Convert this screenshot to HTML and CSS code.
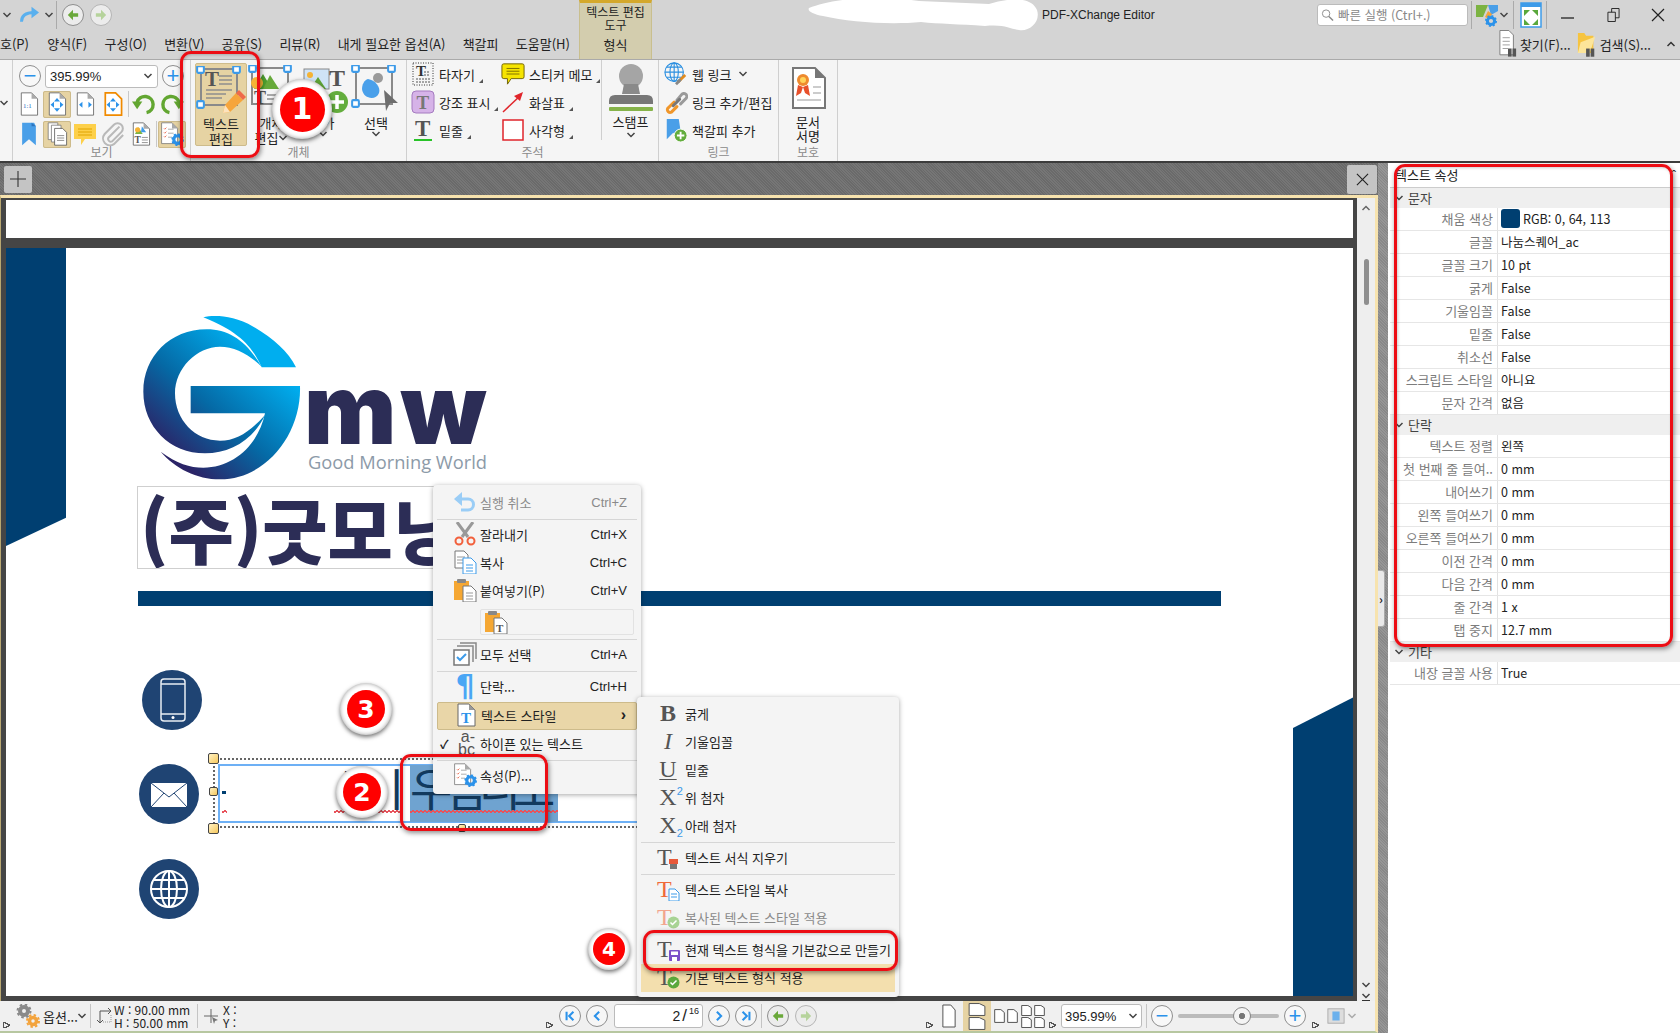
FILE: index.html
```html
<!DOCTYPE html>
<html lang="ko">
<head>
<meta charset="utf-8">
<title>PDF-XChange Editor</title>
<link rel="stylesheet" href="styles.css">
</head>
<body>
<svg class="defs" width="0" height="0" aria-hidden="true">
<defs>
<symbol id="page" viewBox="0 0 24 28"><path d="M3 1H15L22 8V27H3Z" fill="#fff" stroke="#666"/><path d="M15 1V8H22Z" fill="#aaa"/></symbol>
<symbol id="arrows4" viewBox="0 0 24 28"><g fill="#2b92ea"><path d="M12 7l3.5 4h-7zM12 23l3.5-4h-7zM4.500 15l4-3.500v7zM19.500 15l-4-3.500v7z"/></g></symbol>
<symbol id="gear" viewBox="0 0 20 20"><circle cx="10" cy="10" r="6" fill="none" stroke="#2b92ea" stroke-width="5"/><circle cx="10" cy="10" r="8.500" fill="none" stroke="#2b92ea" stroke-width="3" stroke-dasharray="3.300 3.300"/></symbol>
<symbol id="rotl" viewBox="0 0 28 28"><path d="M17 24A9.500 9.500 0 1 0 6 12" fill="none" stroke="#62a631" stroke-width="4"/><path d="M0 11H12L6 20Z" fill="#62a631"/></symbol>
<symbol id="pages" viewBox="0 0 26 30"><path d="M2 1H14V22H2Z" fill="#fff" stroke="#777"/><path d="M6 4H18V25H6Z" fill="#fff" stroke="#777"/><path d="M10 8H20L25 13V29H10Z" fill="#fff" stroke="#555"/><path d="M13 17H22M13 20H22M13 23H22" stroke="#777"/></symbol>
<symbol id="note" viewBox="0 0 24 24"><path d="M1 2H23V17H12L8 23V17H1Z" fill="#fdd04a"/><path d="M5 7H19M5 10H19M5 13H19" stroke="#e0a400"/></symbol>
<symbol id="clip" viewBox="0 0 26 26"><path d="M20 5L8 17a3 3 0 0 0 4 4L22 11a5.500 5.500 0 0 0-8-8L4 13a7.500 7.500 0 0 0 10 11L24 14" fill="none" stroke="#b9b9b9" stroke-width="2.200"/></symbol>
<symbol id="doct" viewBox="0 0 24 28"><use href="#page"/><path d="M9 6l5 8H5z" fill="#7cb342"/><circle cx="8" cy="9" r="3" fill="#f5b335"/><path d="M13 5l5 7h-6z" fill="#3d9be9"/><text x="4.500" y="25" class="ts" font-size="11" font-weight="700" fill="#555">T</text><path d="M13 18H20M13 21H20M13 24H20" stroke="#888"/></symbol>
<symbol id="props" viewBox="0 0 30 30"><path d="M2 1H15L22 8V27H2Z" fill="#fff" stroke="#777"/><path d="M15 1V8H22Z" fill="#aaa"/><path d="M5 8l1 1 2-2M5 13l1 1 2-2M5 18l1 1 2-2" stroke="#e8593a" fill="none"/><path d="M10 9H17M10 14H17M10 19H15" stroke="#999"/><use href="#gear" x="14" y="14" width="16" height="16"/></symbol>
<symbol id="hnd" viewBox="0 0 8 8"><rect x="1" y="1" width="6" height="6" rx="1" fill="#fff" stroke="#3d9be9" stroke-width="1.800"/></symbol>
<symbol id="pencil" viewBox="0 0 24 24"><path d="M14 4L21 11L8 23L1 24L3 16Z" fill="#f6a53c"/><path d="M3 16L8 23L1 24Z" fill="#fde3bd"/><path d="M14 4L17 1L24 8L21 11Z" fill="#ef6a4a"/></symbol>
<symbol id="bigedit" viewBox="0 0 50 50"><rect x="5" y="3" width="36" height="36" fill="none" stroke="#8a8a8a" stroke-width="2"/><text x="9" y="20" class="ts" font-size="21" font-weight="700" fill="#555">T</text><path d="M23 10H36M23 14H36M23 18H36M10 24H36M10 28H30M10 32H26" stroke="#8f8f8f" stroke-width="1.500"/><use href="#hnd" x="0" y="-1" width="9" height="9"/><use href="#hnd" x="36" y="-1" width="9" height="9"/><use href="#hnd" x="0" y="34" width="9" height="9"/><use href="#pencil" x="26" y="23" width="24" height="24"/></symbol>
<symbol id="objedit" viewBox="0 0 50 50"><rect x="5" y="3" width="36" height="36" fill="none" stroke="#8a8a8a" stroke-width="2"/><path d="M16 9l9 15H7z" fill="#4c9e2f"/><circle cx="10" cy="18" r="6" fill="#f5b335"/><path d="M23 10l9 14H16z" fill="#66a93a"/><text x="7" y="39" class="ts" font-size="18" font-weight="700" fill="#555">T</text><path d="M20 30H36M20 34H36" stroke="#8f8f8f" stroke-width="1.500"/><use href="#hnd" x="1" y="-1" width="9" height="9"/><use href="#hnd" x="36" y="-1" width="9" height="9"/><use href="#hnd" x="36" y="34" width="9" height="9"/></symbol>
<symbol id="addobj" viewBox="0 0 50 50"><rect x="6" y="4" width="25" height="20" fill="#cfe3f6" stroke="#888"/><path d="M12 24l8-12 8 12z" fill="#5fa336"/><circle cx="12" cy="10" r="3" fill="#f5b335"/><text x="31" y="21" class="ts" font-size="24" font-weight="700" fill="#555">T</text><circle cx="39" cy="37" r="11" fill="#63ad3d"/><path d="M39 30V44M32 37H46" stroke="#fff" stroke-width="3.500"/></symbol>
<symbol id="selobj" viewBox="0 0 50 50"><rect x="5" y="3" width="36" height="36" fill="none" stroke="#8a8a8a" stroke-width="2"/><circle cx="27" cy="13" r="5" fill="#9a9a9a"/><path d="M17 14C24 15 30 22 28 28C25 36 12 34 11 24C11 20 13 15 17 14Z" fill="#4aa0ea"/><path d="M33 25L47 38L39 38L35 46Z" fill="#6e6e6e"/><use href="#hnd" x="0" y="-1" width="9" height="9"/><use href="#hnd" x="36" y="-1" width="9" height="9"/><use href="#hnd" x="0" y="34" width="9" height="9"/></symbol>
<symbol id="typew" viewBox="0 0 24 24"><rect x="2" y="1" width="20" height="22" fill="none" stroke="#333" stroke-dasharray="1 1.500"/><text x="5" y="14" class="ts" font-size="15" font-weight="700" fill="#333">T</text><path d="M13 10H19M13 13H19M5 17H19M5 20H19" stroke="#555" stroke-dasharray="2 1"/></symbol>
<symbol id="sticky" viewBox="0 0 26 24"><path d="M3 1H23Q25 1 25 3V15Q25 17 23 17H11L7 23V17H3Q1 17 1 15V3Q1 1 3 1Z" fill="#f6e400" stroke="#6b5d00"/><path d="M6 6H20M6 9H20M6 12H20" stroke="#7a6a00"/></symbol>
<symbol id="hili" viewBox="0 0 24 24"><rect x="1" y="1" width="22" height="22" rx="4" fill="#d6b3e8" stroke="#a57bc0"/><text x="5.500" y="19" class="ts" font-size="19" font-weight="700" fill="#777">T</text></symbol>
<symbol id="arrow" viewBox="0 0 24 24"><path d="M2 22L20 5" stroke="#e0252b" stroke-width="1.500"/><path d="M22 2L13 6L19 11Z" fill="#e0252b"/></symbol>
<symbol id="undert" viewBox="0 0 24 24"><text x="4" y="18" class="ts" font-size="23" font-weight="700" fill="#555">T</text><path d="M3 22H21" stroke="#28c328" stroke-width="2"/></symbol>
<symbol id="rectm" viewBox="0 0 24 24"><rect x="2" y="2" width="20" height="20" fill="#fff" stroke="#e0252b" stroke-width="1.500"/></symbol>
<symbol id="stamp" viewBox="0 0 44 47"><circle cx="22" cy="12" r="12" fill="#a5a5a5"/><path d="M15 20H29L31 30H13Z" fill="#8a8a8a"/><path d="M6 31H38Q44 31 44 37V40H0V37Q0 31 6 31Z" fill="#777"/><rect y="43" width="44" height="4" rx="1" fill="#86b34a"/></symbol>
<symbol id="globe" viewBox="0 0 26 26"><g fill="none" stroke="#2b8fe0" stroke-width="1.200"><circle cx="11" cy="11" r="10"/><ellipse cx="11" cy="11" rx="4.500" ry="10"/><path d="M11 1V21M1 11H21M3 5.500H19M3 16.500H19"/></g><path d="M15 22l8-8" stroke="#e08a1e" stroke-width="3"/><path d="M13 24l5-5" stroke="#888" stroke-width="3"/></symbol>
<symbol id="chain" viewBox="0 0 26 26"><g fill="none" stroke-width="3.200" stroke-linecap="round"><path d="M11 13L4 20a3 3 0 0 0 4 4l6-6" stroke="#f0962a"/><path d="M14 11L19 5a3 3 0 0 1 5 4l-6 6" stroke="#9a9a9a"/><path d="M10 17L17 10" stroke="#777"/></g></symbol>
<symbol id="bmplus" viewBox="0 0 26 26"><path d="M3 1H16L18 14V23L10 16L3 23Z" fill="#4a9fe8"/><circle cx="18" cy="19" r="7" fill="#63ad3d" stroke="#fff"/><path d="M18 15V23M14 19H22" stroke="#fff" stroke-width="2"/></symbol>
<symbol id="sign" viewBox="0 0 35 42"><path d="M2 1H24L34 11V41H2Z" fill="#fff" stroke="#777" stroke-width="2"/><path d="M24 1V11H34Z" fill="#777"/><circle cx="12" cy="13" r="6" fill="#ee8a2e"/><circle cx="12" cy="13" r="3" fill="#ffd35a"/><path d="M7 18L5 29L10 26L12 20M17 18L19 29L14 26L12 20" fill="#e8502a"/><path d="M22 20H30M22 26H30M6 33H30" stroke="#999"/></symbol>
<symbol id="back" viewBox="0 0 14 14"><path d="M1 7L7 1V5H13V9H7V13Z" fill="currentColor"/></symbol>
<symbol id="chev" viewBox="0 0 10 8"><path d="M1.500 2L5 5.500L8.500 2" fill="none" stroke="#444" stroke-width="1.500"/></symbol>
<symbol id="thinx" viewBox="0 0 14 14"><path d="M1 1L13 13M13 1L1 13" stroke="#222" stroke-width="1.200"/></symbol>
<symbol id="thinp" viewBox="0 0 16 16"><path d="M8 0V16M0 8H16" stroke="#333" stroke-width="1.100"/></symbol>
<symbol id="nfirst" viewBox="0 0 14 14"><path d="M3 2V12M11 2L6 7L11 12" fill="none" stroke="#2b92ea" stroke-width="2.400"/></symbol>
<symbol id="nprev" viewBox="0 0 14 14"><path d="M9.500 2L4.500 7L9.500 12" fill="none" stroke="#2b92ea" stroke-width="2.400"/></symbol>
<symbol id="undo" viewBox="0 0 24 24"><path d="M3 9H15a5 5 0 0 1 0 11H8" fill="none" stroke="#9acdf6" stroke-width="3"/><path d="M9 2V16L1 9Z" fill="#9acdf6"/></symbol>
<symbol id="scis" viewBox="0 0 24 24"><path d="M4 0L15 15M20 0L9 15" stroke="#999" stroke-width="3"/><circle cx="6" cy="19" r="3.500" fill="none" stroke="#f2603c" stroke-width="2"/><circle cx="18" cy="19" r="3.500" fill="none" stroke="#f2603c" stroke-width="2"/></symbol>
<symbol id="copy" viewBox="0 0 24 24"><path d="M2 1H11L15 5V18H2Z" fill="#fff" stroke="#777"/><path d="M4 7H12M4 10H12M4 13H10" stroke="#999"/><path d="M10 8H18L23 13V24H10Z" fill="#fff" stroke="#3d9be9"/><path d="M13 15H20M13 18H20M13 21H20" stroke="#3d9be9"/></symbol>
<symbol id="paste" viewBox="0 0 24 24"><rect x="1" y="3" width="15" height="19" fill="#f5a733"/><rect x="4" y="1" width="9" height="4" rx="1" fill="#888"/><path d="M10 8H18L23 13V24H10Z" fill="#fff" stroke="#777"/><path d="M13 15H20M13 18H20M13 21H20" stroke="#999"/></symbol>
<symbol id="pastet" viewBox="0 0 24 24"><rect x="1" y="3" width="15" height="19" fill="#f5a733"/><rect x="4" y="1" width="9" height="4" rx="1" fill="#888"/><path d="M10 8H18L23 13V24H10Z" fill="#fff" stroke="#777"/><text x="12" y="22" class="ts" font-size="11" font-weight="700" fill="#555">T</text></symbol>
<symbol id="selall" viewBox="0 0 24 24"><path d="M7 1H23V17M4 4H20V20" fill="none" stroke="#888" stroke-width="1.500"/><rect x="1" y="8" width="15" height="15" fill="#fff" stroke="#777" stroke-width="1.500"/><path d="M4 15l3 3 6-6" fill="none" stroke="#3d9be9" stroke-width="2"/></symbol>
<symbol id="tpage" viewBox="0 0 24 24"><path d="M4 1H15L21 7V23H4Z" fill="#fff" stroke="#666"/><path d="M15 1V7H21Z" fill="#999"/><text x="7" y="20" class="ts" font-size="15" font-weight="700" fill="#2b92ea">T</text></symbol>
<symbol id="tclr" viewBox="0 0 24 24"><text x="1" y="20" class="ts" font-size="24" fill="#555">T</text><rect x="13" y="14" width="9" height="5" fill="#e8593a"/><rect x="14" y="19" width="7" height="5" fill="#777"/></symbol>
<symbol id="tcopy" viewBox="0 0 24 24"><text x="1" y="20" class="ts" font-size="24" fill="#ef6a3a">T</text><path d="M13 12H19L23 16V24H13Z" fill="#fff" stroke="#3d9be9"/><path d="M15 17H21M15 20H21" stroke="#3d9be9"/></symbol>
<symbol id="tapp" viewBox="0 0 24 24"><text x="1" y="20" class="ts" font-size="24" fill="#555">T</text><circle cx="17.500" cy="17.500" r="6" fill="#5aa83c"/><path d="M14.500 17.500l2 2 4-4" fill="none" stroke="#fff" stroke-width="1.500"/></symbol>
<symbol id="tappf" viewBox="0 0 24 24"><text x="1" y="20" class="ts" font-size="24" fill="#f2a58e">T</text><circle cx="17.500" cy="17.500" r="6" fill="#a8d394"/><path d="M14.500 17.500l2 2 4-4" fill="none" stroke="#fff" stroke-width="1.500"/></symbol>
<symbol id="tsave" viewBox="0 0 24 24"><text x="1" y="20" class="ts" font-size="24" fill="#555">T</text><rect x="13" y="13" width="11" height="11" rx="1" fill="#7b4fc9"/><rect x="15" y="14.500" width="7" height="3.500" fill="#fff"/><rect x="16" y="20" width="5" height="4" fill="#fff"/></symbol>
<symbol id="gears" viewBox="0 0 24 24"><circle cx="8" cy="7" r="4" fill="none" stroke="#8a8a8a" stroke-width="4"/><circle cx="8" cy="7" r="6.500" fill="none" stroke="#8a8a8a" stroke-width="2" stroke-dasharray="2.500 2.600"/><circle cx="17" cy="17" r="3.500" fill="none" stroke="#f3a33c" stroke-width="3.500"/><circle cx="17" cy="17" r="6" fill="none" stroke="#f3a33c" stroke-width="2" stroke-dasharray="2.400 2.300"/></symbol>
<symbol id="vpage" viewBox="0 0 16 24" preserveAspectRatio="none"><path d="M1 1H10L15 6V23H1Z" fill="#fff" stroke="#555" vector-effect="non-scaling-stroke"/></symbol>
</defs>
</svg>

<div class="app">
  <header class="topbar">
    <div class="top-left">
      <div class="row-title">
        <svg class="ic-chev chev-first"><use href="#chev"/></svg>
        <svg class="ic-redo" viewBox="0 0 24 24"><path d="M3 20C3 12 9 9 18 9" fill="none" stroke="#5ab0ee" stroke-width="3.500"/><path d="M15 2L24 9L15 16Z" fill="#5ab0ee"/></svg>
        <svg class="ic-chev"><use href="#chev"/></svg>
        <span class="tdiv"></span>
        <span class="circ circ-green"><svg><use href="#back"/></svg></span>
        <span class="circ circ-pale circ-fwd"><svg class="flip"><use href="#back"/></svg></span>
      </div>
      <nav class="menu">
        <span>호(P)</span><span>양식(F)</span><span>구성(O)</span><span>변환(V)</span><span>공유(S)</span><span>리뷰(R)</span><span>내게 필요한 옵션(A)</span><span>책갈피</span><span>도움말(H)</span>
      </nav>
    </div>
    <div class="ctx-tab">
      <div class="ctx-title">텍스트 편집<br>도구</div>
      <div class="ctx-name">형식</div>
    </div>
    <div class="top-right">
      <div class="row-title row-title-r">
        <svg class="scribble" viewBox="0 0 230 30"><path d="M0 8C20 0 60 -6 110 1L180 4C200 -2 222 -4 228 10C232 22 220 32 210 30C200 29 196 24 176 26C150 24 130 24 112 22C80 25 40 22 14 16C4 14 -2 11 0 8Z" fill="#fff"/></svg>
        <span class="app-title">PDF-XChange Editor</span>
        <div class="quick"><svg viewBox="0 0 14 14"><circle cx="5.500" cy="5.500" r="4" fill="none" stroke="#888"/><path d="M8.500 8.500L13 13" stroke="#888" stroke-width="1.500"/></svg><span>빠른 실행 (Ctrl+.)</span></div>
        <span class="tdiv tdiv-a"></span>
        <svg class="ic-tools" viewBox="0 0 24 24"><path d="M1 2H13L8 14H1Z" fill="#7cb342"/><path d="M13 2H23V8L16 12Z" fill="#4a9fe8"/><path d="M10 14L13 8L17 11L14 16Z" fill="#f3a33c"/><use href="#gear" x="10" y="12" width="12" height="12"/></svg>
        <svg class="ic-chev"><use href="#chev"/></svg>
        <span class="tdiv tdiv-b"></span>
        <svg class="ic-full" viewBox="0 0 22 26"><rect x="1" y="1" width="20" height="24" fill="#fff" stroke="#3d9be9" stroke-width="1.500"/><rect x="1" y="1" width="20" height="4" fill="#3d9be9"/><g fill="#5aa83c"><path d="M4 8h6l-6 6zM18 8v6l-6-6zM4 23v-6l6 6zM18 23h-6l6-6z"/></g></svg>
        <span class="tdiv tdiv-c"></span>
        <svg class="win-min" viewBox="0 0 14 14"><path d="M0 10H13" stroke="#222" stroke-width="1.300"/></svg>
        <svg class="win-max" viewBox="0 0 14 16"><path d="M1 5H9V15H1Z M5 5V1H13V11H9" fill="none" stroke="#222"/></svg>
        <svg class="win-close"><use href="#thinx"/></svg>
      </div>
      <div class="row-find">
        <svg class="ic-find" viewBox="0 0 20 32"><path d="M1 1H11L16 6V28H1Z" fill="#fff" stroke="#777"/><path d="M4 9H12M4 13H12M4 17H12M4 21H10" stroke="#999"/><rect x="10" y="21" width="4" height="9" fill="#555"/><rect x="15" y="21" width="4" height="9" fill="#555"/></svg>
        <span class="find-l">찾기(F)...</span>
        <svg class="ic-folder" viewBox="0 0 22 32"><path d="M1 4H8L10 7H18V26H1Z" fill="#f6c440"/><path d="M4 14L20 8L14 26H1Z" fill="#fce59a"/><rect x="10" y="21" width="4" height="9" fill="#555"/><rect x="15" y="21" width="4" height="9" fill="#555"/></svg>
        <span class="find-l find-s">검색(S)...</span>
        <svg class="ic-up" viewBox="0 0 10 8"><path d="M1.500 6L5 2.500L8.500 6" fill="none" stroke="#333" stroke-width="1.500"/></svg>
      </div>
    </div>
  </header>

  <section class="ribbon">
    <div class="rgroup g-stub"><div class="rbody stub-body"><svg class="ic-chev"><use href="#chev"/></svg></div></div>

    <div class="rgroup g-view">
      <div class="rbody view-body">
        <div class="zoom-row">
          <span class="circ circ-zoom">−</span>
          <div class="combo"><span>395.99%</span><svg class="ic-chev"><use href="#chev"/></svg></div>
          <span class="circ circ-zoom">+</span>
        </div>
        <div class="icon-row">
          <span class="cell"><svg class="i24" viewBox="0 0 24 28"><use href="#page"/><text x="5" y="19" font-size="8" fill="#2b6fc0" class="ts">1:1</text></svg></span>
          <span class="cell cell-on"><svg class="i24"><use href="#page"/><use href="#arrows4"/></svg></span>
          <span class="cell"><svg class="i24" viewBox="0 0 24 28"><use href="#page"/><path d="M5 15l4-3.500v7zM20 15l-4-3.500v7z" fill="#2b92ea"/></svg></span>
          <span class="cell"><svg class="i24" viewBox="0 0 24 28"><path d="M3 1H15L22 8V27H3Z" fill="#fff" stroke="#f08a00" stroke-width="2"/><use href="#arrows4"/></svg></span>
          <span class="vsep"></span>
          <span class="cell cell-rot"><svg class="i24"><use href="#rotl"/></svg></span>
          <span class="cell"><svg class="i24 flip"><use href="#rotl"/></svg></span>
        </div>
        <div class="icon-row">
          <span class="cell"><svg class="i24" viewBox="0 0 24 28"><path d="M4 1H18L20 5V27L12 20L4 27Z" fill="#4a9fe8"/><path d="M15 1L20 5H15Z" fill="#2d74bd"/></svg></span>
          <span class="cell cell-on"><svg class="i24"><use href="#pages"/></svg></span>
          <span class="cell"><svg class="i24"><use href="#note"/></svg></span>
          <span class="cell"><svg class="i24"><use href="#clip"/></svg></span>
          <span class="cell"><svg class="i24"><use href="#doct"/></svg></span>
          <span class="vsep vsep-b"></span>
          <span class="cell cell-on cell-last"><svg class="i24"><use href="#props"/></svg></span>
        </div>
      </div>
      <div class="rlabel">보기</div>
    </div>

    <div class="rgroup g-obj">
      <div class="rbody obj-body">
        <div class="rbtn rbtn-on"><svg class="i50"><use href="#bigedit"/></svg><span>텍스트</span><span>편집</span></div>
        <div class="rbtn rbtn-obj"><svg class="i50"><use href="#objedit"/></svg><span>개체</span><span>편집<svg class="ic-chev"><use href="#chev"/></svg></span></div>
        <div class="rbtn rbtn-add"><svg class="i50"><use href="#addobj"/></svg><span>추가</span><svg class="ic-chev"><use href="#chev"/></svg></div>
        <div class="rbtn rbtn-sel"><svg class="i50"><use href="#selobj"/></svg><span>선택</span><svg class="ic-chev"><use href="#chev"/></svg></div>
      </div>
      <div class="rlabel">개체</div>
    </div>

    <div class="rgroup g-ann">
      <div class="rbody ann-body">
        <div class="acol acol-1">
          <div class="aitem"><svg class="i24"><use href="#typew"/></svg><span>타자기</span><i class="corner"></i></div>
          <div class="aitem"><svg class="i24"><use href="#hili"/></svg><span>강조 표시</span><i class="corner"></i></div>
          <div class="aitem"><svg class="i24"><use href="#undert"/></svg><span>밑줄</span><i class="corner"></i></div>
        </div>
        <div class="acol acol-2">
          <div class="aitem"><svg class="i24"><use href="#sticky"/></svg><span>스티커 메모</span><i class="corner"></i></div>
          <div class="aitem"><svg class="i24"><use href="#arrow"/></svg><span>화살표</span><i class="corner"></i></div>
          <div class="aitem"><svg class="i24"><use href="#rectm"/></svg><span>사각형</span><i class="corner"></i></div>
        </div>
        <div class="stampbtn"><svg class="i-stamp"><use href="#stamp"/></svg><span>스탬프</span><svg class="ic-chev"><use href="#chev"/></svg></div>
      </div>
      <div class="rlabel">주석</div>
    </div>

    <div class="rgroup g-link">
      <div class="rbody link-body">
        <div class="aitem"><svg class="i24"><use href="#globe"/></svg><span>웹 링크</span><svg class="ic-chev chev-gap"><use href="#chev"/></svg></div>
        <div class="aitem"><svg class="i24"><use href="#chain"/></svg><span>링크 추가/편집</span></div>
        <div class="aitem"><svg class="i24"><use href="#bmplus"/></svg><span>책갈피 추가</span></div>
      </div>
      <div class="rlabel">링크</div>
    </div>

    <div class="rgroup g-prot">
      <div class="rbody prot-body"><svg class="i-sign"><use href="#sign"/></svg><span>문서</span><span>서명</span></div>
      <div class="rlabel">보호</div>
    </div>
  </section>

  <main class="workspace">
    <div class="doc-col">
      <div class="tabstrip">
        <span class="tab-btn"><svg class="tab-plus"><use href="#thinp"/></svg></span>
        <span class="tab-btn tab-x"><svg class="tab-close"><use href="#thinx"/></svg></span>
      </div>
      <div class="viewer">
        <div class="pages">
          <div class="page page-top"></div>
          <div class="page page-main">
            <div class="banner-l"></div>
            <div class="banner-r"></div>
            <svg class="logo" viewBox="0 0 1500 1200">
              <defs><linearGradient id="lg" gradientUnits="userSpaceOnUse" x1="750" y1="430" x2="480" y2="730"><stop offset="0" stop-color="#00aeef"/><stop offset=".55" stop-color="#0569a5"/><stop offset="1" stop-color="#2b2467"/></linearGradient></defs>
              <path fill="url(#lg)" d="M785 500C740 425 690 388 620 388C510 388 430 470 430 575C430 680 510 760 615 760C690 760 760 720 795 645C750 695 710 722 660 722C585 722 525 660 525 580C525 505 590 440 660 440C705 440 750 465 785 500Z"/>
              <path fill="#00aeef" d="M610 352C640 345 700 345 760 380C820 415 865 455 888 502L785 502C760 445 720 395 610 352Z"/>
              <path fill="url(#lg)" d="M572 558L900 558C905 700 800 838 660 838C590 838 525 805 482 755C530 790 570 803 610 803C700 803 775 735 795 640L572 640Z"/>
            </svg>
            <div class="logo-mw">mw</div>
            <div class="logo-tag">Good Morning World</div>
            <div class="namebox"><span>(주)굿모닝월드</span></div>
            <div class="rulebar"></div>
            <div class="contact c-phone"><svg viewBox="0 0 60 60"><rect x="19" y="9" width="24" height="42" rx="3" fill="none" stroke="#e8edf3" stroke-width="1.500"/><path d="M19 14H43M19 44H43" stroke="#e8edf3" stroke-width="1.500"/><circle cx="31" cy="47.500" r="1.500" fill="#fff"/></svg></div>
            <div class="contact c-mail"><svg viewBox="0 0 60 60"><rect x="12" y="19" width="36" height="24" fill="#fff"/><path d="M12 19L30 33L48 19M12 43L25 29M48 43L35 29" fill="none" stroke="#1f4473"/></svg></div>
            <div class="contact c-web"><svg viewBox="0 0 60 60"><g fill="none" stroke="#fff" stroke-width="2"><circle cx="30" cy="30" r="18"/><ellipse cx="30" cy="30" rx="8" ry="18"/><path d="M30 12V48M12 30H48M15 21H45M15 39H45"/></g></svg></div>

            <div class="tb-dotted"></div>
            <div class="tb-box"></div>
            <div class="tb-sel"></div>
            <div class="tb-mark"></div>
            <div class="tb-text-l">구ㅣ</div>
            <div class="tb-text">우림니오</div>
            <div class="wavy wavy-a"></div>
            <div class="wavy wavy-b"></div>
            <div class="wavy wavy-c"></div>
            <span class="handle h-tl"></span>
            <span class="handle h-ml"></span>
            <span class="handle h-bl"></span>
            <span class="handle h-bm"></span>
          </div>
        </div>
        <div class="scrollbar">
          <svg class="ic-chev sc-up" viewBox="0 0 10 8"><path d="M1.500 6L5 2.500L8.500 6" fill="none" stroke="#666" stroke-width="1.500"/></svg>
          <span class="sc-thumb"></span>
          <svg class="ic-chev sc-down"><use href="#chev"/></svg>
          <svg class="ic-chev sc-end"><use href="#chev"/></svg>
          <span class="sc-endline"></span>
        </div>
      </div>
      <footer class="status">
        <span class="grip"></span>
        <svg class="st-gears"><use href="#gears"/></svg>
        <span class="st-opt">옵션...</span>
        <svg class="ic-chev"><use href="#chev"/></svg>
        <span class="st-div st-div-1"></span>
        <svg class="st-size" viewBox="0 0 16 18"><path d="M4 4H15M12 1L15 4L12 7M4 4V16M1 13L4 16L7 13" fill="none" stroke="#555"/><path d="M7 15H15V8" fill="none" stroke="#999" stroke-dasharray="1 1"/></svg>
        <div class="st-wh"><span>W :&nbsp;90.00 mm</span><span>H :&nbsp;50.00 mm</span></div>
        <span class="st-div"></span>
        <svg class="st-cross" viewBox="0 0 16 16"><path d="M8 1V15M1 8H15" stroke="#666"/><path d="M9 9L15 12L12 13L11 16Z" fill="#777"/></svg>
        <div class="st-xy"><span>X :</span><span>Y :</span></div>

        <span class="grip grip-nav"></span>
        <span class="circ circ-st"><svg><use href="#nfirst"/></svg></span>
        <span class="circ circ-st"><svg><use href="#nprev"/></svg></span>
        <div class="pg-input"><span>2</span><span class="pg-sl">/</span><sup>16</sup></div>
        <span class="circ circ-st"><svg class="flip"><use href="#nprev"/></svg></span>
        <span class="circ circ-st"><svg class="flip"><use href="#nfirst"/></svg></span>
        <span class="st-div st-div-n"></span>
        <span class="circ circ-green circ-st2"><svg><use href="#back"/></svg></span>
        <span class="circ circ-pale circ-st2"><svg class="flip"><use href="#back"/></svg></span>

        <span class="grip grip-view"></span>
        <svg class="vw vw-1"><use href="#vpage"/></svg>
        <span class="vw-on"><svg class="vw-mini"><use href="#vpage"/></svg><svg class="vw-mini"><use href="#vpage"/></svg></span>
        <span class="vw-two"><svg class="vw-mini"><use href="#vpage"/></svg><svg class="vw-mini"><use href="#vpage"/></svg></span>
        <span class="vw-four"><svg class="vw-mini"><use href="#vpage"/></svg><svg class="vw-mini"><use href="#vpage"/></svg><svg class="vw-mini"><use href="#vpage"/></svg><svg class="vw-mini"><use href="#vpage"/></svg></span>
        <span class="grip grip-z"></span>
        <div class="combo combo-st"><span>395.99%</span><svg class="ic-chev"><use href="#chev"/></svg></div>
        <span class="st-div st-div-z"></span>
        <span class="circ circ-zoom circ-zs">−</span>
        <span class="slider"><span class="slider-thumb"></span></span>
        <span class="circ circ-zoom circ-zs">+</span>
        <span class="grip grip-e"></span>
        <svg class="st-panel" viewBox="0 0 20 20"><rect x="1" y="2" width="18" height="16" fill="#ddd" stroke="#aaa"/><rect x="6" y="5" width="8" height="10" fill="#6ab0ec"/></svg>
        <svg class="ic-chev st-last"><use href="#chev"/></svg>
      </footer>
    </div>
    <div class="splitter"><span class="split-handle">›</span></div>
    <aside class="panel">
      <div class="panel-head"><span>텍스트 속성</span><i>ˆ</i></div>
      <div class="prop-sec"><svg class="ic-chev"><use href="#chev"/></svg>문자</div>
      <div class="prop"><label>채움 색상</label><div class="val"><span class="swatch"></span>RGB: 0, 64, 113</div></div>
      <div class="prop"><label>글꼴</label><div class="val">나눔스퀘어_ac</div></div>
      <div class="prop"><label>글꼴 크기</label><div class="val">10 pt</div></div>
      <div class="prop"><label>굵게</label><div class="val">False</div></div>
      <div class="prop"><label>기울임꼴</label><div class="val">False</div></div>
      <div class="prop"><label>밑줄</label><div class="val">False</div></div>
      <div class="prop"><label>취소선</label><div class="val">False</div></div>
      <div class="prop"><label>스크립트 스타일</label><div class="val">아니요</div></div>
      <div class="prop"><label>문자 간격</label><div class="val">없음</div></div>
      <div class="prop-sec"><svg class="ic-chev"><use href="#chev"/></svg>단락</div>
      <div class="prop"><label>텍스트 정렬</label><div class="val">왼쪽</div></div>
      <div class="prop"><label>첫 번째 줄 들여..</label><div class="val">0 mm</div></div>
      <div class="prop"><label>내어쓰기</label><div class="val">0 mm</div></div>
      <div class="prop"><label>왼쪽 들여쓰기</label><div class="val">0 mm</div></div>
      <div class="prop"><label>오른쪽 들여쓰기</label><div class="val">0 mm</div></div>
      <div class="prop"><label>이전 간격</label><div class="val">0 mm</div></div>
      <div class="prop"><label>다음 간격</label><div class="val">0 mm</div></div>
      <div class="prop"><label>줄 간격</label><div class="val">1 x</div></div>
      <div class="prop"><label>탭 중지</label><div class="val">12.7 mm</div></div>
      <div class="prop-sec"><svg class="ic-chev"><use href="#chev"/></svg>기타</div>
      <div class="prop"><label>내장 글꼴 사용</label><div class="val">True</div></div>
    </aside>
  </main>

  <div class="ctxmenu">
    <div class="mi mi-off"><svg class="i24"><use href="#undo"/></svg><span>실행 취소</span><em>Ctrl+Z</em></div>
    <div class="msep"></div>
    <div class="mi"><svg class="i24"><use href="#scis"/></svg><span>잘라내기</span><em>Ctrl+X</em></div>
    <div class="mi"><svg class="i24"><use href="#copy"/></svg><span>복사</span><em>Ctrl+C</em></div>
    <div class="mi"><svg class="i24"><use href="#paste"/></svg><span>붙여넣기(P)</span><em>Ctrl+V</em></div>
    <div class="pastebox"><svg class="i24"><use href="#pastet"/></svg></div>
    <div class="msep msep-p"></div>
    <div class="mi"><svg class="i24"><use href="#selall"/></svg><span>모두 선택</span><em>Ctrl+A</em></div>
    <div class="msep"></div>
    <div class="mi"><b class="pilcrow">¶</b><span>단락...</span><em>Ctrl+H</em></div>
    <div class="mi mi-on"><svg class="i24"><use href="#tpage"/></svg><span>텍스트 스타일</span><em class="arrow">›</em></div>
    <div class="mi"><b class="check">✓</b><b class="abc">a-<br>bc</b><span>하이픈 있는 텍스트</span></div>
    <div class="msep"></div>
    <div class="mi"><svg class="i24"><use href="#props"/></svg><span>속성(P)...</span></div>
  </div>

  <div class="ctxmenu submenu">
    <div class="mi"><b class="fmt">B</b><span>굵게</span></div>
    <div class="mi"><b class="fmt fmt-i">I</b><span>기울임꼴</span></div>
    <div class="mi"><b class="fmt fmt-u">U</b><span>밑줄</span></div>
    <div class="mi"><b class="fmt fmt-x">X<sup>2</sup></b><span>위 첨자</span></div>
    <div class="mi"><b class="fmt fmt-x">X<sub>2</sub></b><span>아래 첨자</span></div>
    <div class="msep"></div>
    <div class="mi"><svg class="i24"><use href="#tclr"/></svg><span>텍스트 서식 지우기</span></div>
    <div class="msep"></div>
    <div class="mi"><svg class="i24"><use href="#tcopy"/></svg><span>텍스트 스타일 복사</span></div>
    <div class="mi mi-off"><svg class="i24"><use href="#tappf"/></svg><span>복사된 텍스트 스타일 적용</span></div>
    <div class="mi mi-gap"><svg class="i24"><use href="#tsave"/></svg><span>현재 텍스트 형식을 기본값으로 만들기</span></div>
    <div class="mi mi-hot"><svg class="i24"><use href="#tapp"/></svg><span>기본 텍스트 형식 적용</span></div>
  </div>

  <div class="redbox rb-1"></div>
  <div class="redbox rb-2"></div>
  <div class="redbox rb-3"></div>
  <div class="redbox rb-4"></div>
  <div class="badge b-1"><span>1</span></div>
  <div class="badge b-2"><span>2</span></div>
  <div class="badge b-3"><span>3</span></div>
  <div class="badge b-4"><span>4</span></div>
</div>
</body>
</html>
```
FILE: styles.css
```css
* { box-sizing: border-box; }
html, body { margin: 0; padding: 0; }
body { font-family: "Noto Sans CJK KR", "Liberation Sans", sans-serif; font-size: 13px; color: #222; background: #d4d4d4; }
.defs { position: absolute; }
.ts { font-family: "Liberation Serif", serif; }
.app { position: relative; width: 1680px; height: 1033px; overflow: hidden; display: flex; flex-direction: column; }
svg { display: block; flex: none; overflow: visible; }
.flip { transform: scaleX(-1); }
.ic-chev { width: 10px; height: 8px; flex: none; }
.i24 { width: 24px; height: 24px; }
.i50 { width: 50px; height: 50px; }

/* top bar */
.topbar { height: 60px; flex: none; display: flex; background: #d4d4d4; border-bottom: 1px solid #aaa; }
.top-left { width: 579px; flex: none; }
.row-title { height: 29px; display: flex; align-items: center; }
.chev-first { margin-left: 2px; }
.ic-redo { width: 20px; height: 20px; margin: 0 5px 0 7px; }
.tdiv { width: 1px; height: 28px; background: #aaa; margin-left: 2px; }
.circ { width: 22px; height: 22px; border-radius: 50%; border: 1px solid #8e8e8e; background: #ececec; display: flex; align-items: center; justify-content: center; flex: none; }
.circ svg { width: 12px; height: 12px; }
.circ-green { color: #6aa83a; margin-left: 5px; }
.circ-pale { color: #b6d39c; border-color: #b5b5b5; }
.circ-fwd { margin-left: 6px; }
.menu { height: 30px; display: flex; align-items: center; gap: 17.300px; white-space: nowrap; color: #222; line-height: 30px; }
.menu span:first-child { margin-right: 1px; }
.ctx-tab { width: 73px; flex: none; background: #d3cdae; border: 1px solid #c9bf8e; border-top: 3px solid #d4a82c; border-bottom: 0; text-align: center; font-size: 12px; }
.ctx-title { line-height: 13px; height: 26px; margin-top: 2px; }
.ctx-name { font-size: 13px; line-height: 20px; margin-top: 4px; }
.top-right { flex: 1; min-width: 0; }
.row-title-r { position: relative; }
.scribble { width: 230px; height: 30px; margin: 0 0 0 157px; }
.app-title { margin-left: 3px; font-family: "Liberation Sans", sans-serif; font-size: 12px; width: 275px; flex: none; }
.quick { width: 151px; height: 22px; background: #fff; border: 1px solid #bbb; border-radius: 3px; display: flex; align-items: center; padding-left: 3px; gap: 4px; color: #888; font-size: 12.500px; white-space: nowrap; flex: none; }
.quick svg { width: 13px; height: 14px; }
.tdiv-a { margin-left: 3px; }
.ic-tools { width: 24px; height: 24px; margin-left: 3px; }
.tdiv-b { margin-left: 4px; }
.ic-full { width: 22px; height: 26px; margin-left: 6px; }
.tdiv-c { margin-left: 4px; }
.win-min { width: 14px; height: 14px; margin-left: 14px; }
.win-max { width: 13px; height: 16px; margin-left: 32px; }
.win-close { width: 14px; height: 14px; margin-left: 31px; }
.row-find { height: 30px; display: flex; align-items: center; justify-content: flex-end; white-space: nowrap; }
.ic-find { width: 18px; height: 30px; margin-right: 3px; }
.ic-folder { width: 20px; height: 30px; margin: 0 3px 0 6px; }
.find-l { font-size: 13px; }
.find-s { margin-right: 15px; }
.ic-up { width: 10px; height: 8px; margin-right: 4px; }

/* ribbon */
.ribbon { height: 103px; flex: none; display: flex; background: #f5f5f5; border-bottom: 2px solid #3c3c3c; }
.rgroup { display: flex; flex-direction: column; border-right: 1px solid #cfcfcf; flex: none; height: 101px; }
.rbody { height: 83px; }
.rlabel { height: 18px; line-height: 18px; text-align: center; color: #8a8a8a; font-size: 12px; }
.g-stub { width: 13px; }
.stub-body { display: flex; align-items: center; padding-top: 3px; }
.stub-body .ic-chev { margin-left: -1px; }
.g-view { width: 178px; }
.view-body { padding-top: 4px; }
.zoom-row { display: flex; align-items: center; gap: 4px; padding-left: 6px; height: 24px; }
.circ-zoom { font-size: 22px; line-height: 1; color: #2b92ea; font-family: "Liberation Sans", sans-serif; background: #f8f8f8; }
.combo { width: 113px; height: 23px; background: #fff; border: 1px solid #bbb; border-radius: 3px; display: flex; align-items: center; justify-content: space-between; padding: 0 4px; font-size: 13px; font-family: "Liberation Sans", sans-serif; }
.icon-row { display: flex; padding-left: 2px; height: 28px; margin-top: 2px; align-items: center; }
.cell { width: 28px; height: 27px; display: flex; align-items: center; justify-content: center; flex: none; }
.cell-on { background: #e6d3a3; outline: 1px solid #cdbb8b; outline-offset: -1px; border-radius: 2px; }
.cell-rot { margin-left: 1px; }
.cell-last { margin-left: 1px; }
.vsep { width: 1px; height: 26px; background: #c8c8c8; margin-left: 1px; }
.vsep-b { margin-left: 1px; }
.obj-body { display: flex; padding: 3px 0 0 4px; }
.g-obj { width: 216px; }
.rbtn { display: flex; flex-direction: column; align-items: center; padding-top: 2px; line-height: 15px; height: 83px; flex: none; width: 52px; }
.rbtn-on { background: #e6d3a3; border: 1px solid #cdbb8b; border-radius: 2px; }
.rbtn-obj { width: 47px; margin-left: 1px; }
.rbtn-obj span { display: flex; align-items: center; }
.rbtn-add { width: 55px; }
.rbtn-sel { width: 52px; }
.g-ann { width: 252px; }
.ann-body { display: flex; }
.acol-1 { width: 94px; padding-left: 4px; }
.acol-2 { width: 100px; }
.aitem { height: 28px; display: flex; align-items: center; gap: 4px; white-space: nowrap; }
.corner { width: 0; height: 0; border-style: solid; border-width: 0 0 4px 4px; border-color: transparent transparent #555 transparent; align-self: flex-end; margin: 0 0 5px 0; }
.stampbtn { width: 58px; border-left: 1px solid #cfcfcf; margin: 0 -1px 0 0; display: flex; flex-direction: column; align-items: center; line-height: 15px; padding-top: 4px; height: 80px; }
.i-stamp { width: 44px; height: 47px; margin-bottom: 3px; }
.stampbtn .ic-chev { margin-top: 2px; }
.g-link { width: 120px; }
.link-body { padding-left: 5px; }
.chev-gap { margin-left: 2px; }
.g-prot { width: 59px; }
.prot-body { display: flex; flex-direction: column; align-items: center; line-height: 14px; padding-top: 7px; }
.i-sign { width: 35px; height: 42px; margin-bottom: 6px; }

/* workspace */
.workspace { flex: 1; min-height: 0; display: flex; }
.doc-col { width: 1378px; flex: none; display: flex; flex-direction: column; }
.tabstrip { height: 32px; flex: none; background: #6f6f6f repeating-linear-gradient(45deg, #6a6a6a 0 1px, #767676 1px 2px); display: flex; justify-content: space-between; align-items: center; padding: 1px 1px 1px 4px; }
.tab-btn { width: 28px; height: 27px; background: #c4c4c4; border-radius: 2px; display: flex; align-items: center; justify-content: center; }
.tab-x { width: 30px; height: 29px; }
.tab-plus { width: 16px; height: 16px; }
.tab-close { width: 13px; height: 13px; }
.viewer { flex: 1; min-height: 0; display: flex; border-top: 3px solid #f7e3ae; border-left: 1px solid #b9a771; border-right: 3px solid #f7e3ae; }
.pages { flex: 1; min-width: 0; background: #454545; padding: 2px 4px 5px 5px; display: flex; flex-direction: column; overflow: hidden; }
.page { background: #fff; }
.page-top { height: 38px; flex: none; margin-bottom: 10px; }
.page-main { flex: 1; position: relative; overflow: hidden; }
.scrollbar { width: 18px; flex: none; background: #eeeeee; display: flex; flex-direction: column; align-items: center; }
.sc-up { margin-top: 6px; }
.sc-thumb { width: 5px; height: 51px; background: #8f8f8f; border-radius: 3px; margin-top: 47px; }
.sc-down { margin-top: 676px; }
.sc-end { margin-top: 3px; }
.sc-endline { width: 8px; height: 1px; background: #333; }

.banner-l { position: absolute; left: 0; top: 0; width: 60px; height: 298px; background: #003f71; clip-path: polygon(0 0, 100% 0, 100% 90.500%, 0 100%); }
.banner-r { position: absolute; left: 1287px; top: 449px; width: 61px; height: 300px; background: #003f71; clip-path: polygon(0 31px, 100% 0, 100% 100%, 0 100%); }
.logo { position: absolute; left: -6px; top: -48px; width: 500px; height: 400px; }
.logo-mw { position: absolute; left: 298px; top: 112px; font-family: Inter, "Liberation Sans", sans-serif; font-weight: 900; font-size: 98px; line-height: 1; letter-spacing: 4px; color: #2c2d56; }
.logo-tag { position: absolute; left: 302px; top: 202px; font-family: "Open Sans", sans-serif; font-size: 18.300px; line-height: 24px; color: #8c9aa8; white-space: nowrap; }
.namebox { position: absolute; left: 131px; top: 238px; width: 400px; height: 83px; border: 1px solid #cfcfcf; overflow: hidden; padding-left: 2px; }
.namebox span { font-weight: 900; font-size: 71px; line-height: 81px; color: #2c2d56; white-space: nowrap; }
.rulebar { position: absolute; left: 132px; top: 343px; width: 1083px; height: 15px; background: #003f71; }
.contact { position: absolute; width: 60px; height: 60px; border-radius: 50%; background: #1f4473; }
.contact svg { width: 60px; height: 60px; }
.c-phone { left: 136px; top: 422px; }
.c-mail { left: 133px; top: 516px; }
.c-web { left: 133px; top: 611px; }
.tb-dotted { position: absolute; left: 207px; top: 510px; width: 600px; height: 70px; border: 2px dotted #666; }
.tb-box { position: absolute; left: 212px; top: 516px; width: 600px; height: 59px; border: 2px solid #6db0f5; }
.tb-sel { position: absolute; left: 404px; top: 517px; width: 148px; height: 57px; background: #6fa3d0; }
.tb-mark { position: absolute; left: 216px; top: 543px; width: 4px; height: 3px; background: #003f71; }
.tb-text, .tb-text-l { position: absolute; top: 508px; font-size: 46px; line-height: 60px; color: #123a5e; font-weight: 400; white-space: nowrap; letter-spacing: -8px; }
.tb-text { left: 404px; }
.tb-text-l { left: 332px; letter-spacing: -5px; }
.wavy { position: absolute; top: 562px; height: 3px; background-image: linear-gradient(135deg, transparent 40%, #e8545c 40%, #e8545c 60%, transparent 60%), linear-gradient(45deg, transparent 40%, #e8545c 40%, #e8545c 60%, transparent 60%); background-size: 4px 3px; background-position: 0 0, 2px 0; }
.wavy-a { left: 216px; width: 5px; }
.wavy-b { left: 328px; width: 68px; }
.wavy-c { left: 404px; width: 148px; }
.handle { position: absolute; width: 11px; height: 11px; background: linear-gradient(135deg, #fff2c4, #f6c85c); border: 1px solid #444; border-radius: 2px; }
.h-tl { left: 202px; top: 505px; }
.h-ml { left: 203px; top: 539px; width: 9px; height: 9px; }
.h-bl { left: 202px; top: 575px; }
.h-bm { left: 452px; top: 576px; width: 8px; height: 8px; }

/* status */
.status { height: 32px; flex: none; background: #f0f0f0; border-bottom: 2px solid #b7c7a0; border-right: 3px solid #f7e3ae; display: flex; align-items: center; font-size: 13px; white-space: nowrap; padding-left: 2px; }
.grip { width: 10px; height: 16px; margin-bottom: 8px; background: radial-gradient(#a8a8a8 40%, transparent 45%) 0 0 / 2px 2px; flex: none; position: relative; }
.grip::after { content: ""; position: absolute; left: 1px; bottom: -8px; width: 6px; height: 6px; border-left: 1px solid #555; background: linear-gradient(to bottom left, transparent 45%, #555 45%, #555 65%, transparent 65%) 0 0 / 100% 50% no-repeat, linear-gradient(to bottom right, transparent 45%, #555 45%, #555 65%, transparent 65%) 0 100% / 100% 50% no-repeat; }
.st-gears { width: 24px; height: 24px; margin-left: 4px; }
.st-opt { margin-left: 3px; width: 32px; }
.status > .ic-chev { margin-left: 2px; }
.st-div { width: 1px; height: 24px; background: #c4c4c4; flex: none; margin-left: 3px; }
.st-div-1 { margin-left: 3px; }
.st-size { width: 16px; height: 18px; margin-left: 5px; }
.st-wh, .st-xy { display: flex; flex-direction: column; line-height: 13px; margin-left: 2px; font-size: 12px; width: 80px; }
.st-cross { width: 16px; height: 16px; margin-left: 5px; }
.st-xy { width: 30px; margin-left: 4px; }
.grip-nav { margin-left: 292px; }
.circ-st { margin-left: 5px; background: #f6f6f6; }
.grip-nav + .circ-st { margin-left: 4px; }
.pg-input { width: 89px; height: 24px; border: 1px solid #bbb; border-radius: 3px; background: #fff; margin-left: 6px; display: flex; align-items: center; justify-content: flex-end; padding-right: 3px; font-size: 14px; font-family: "Liberation Sans", sans-serif; flex: none; }
.pg-sl { margin: 0 2px; font-size: 17px; }
.pg-input sup { font-size: 9px; align-self: flex-start; margin-top: 1px; }
.st-div-n { margin-left: 4px; }
.circ-st2 { margin-left: 5px; }
.circ-pale.circ-st2 { margin-left: 6px; }
.grip-view { margin-left: 108px; }
.vw { width: 14px; height: 24px; margin-left: 7px; }
.vw-on { width: 28px; height: 30px; margin-left: 7px; background: #e6d3a3; display: flex; flex-direction: column; align-items: center; justify-content: center; gap: 1px; flex: none; }
.vw-mini { width: 11px; height: 11px; }
.vw-on .vw-mini { width: 18px; height: 13px; }
.vw-two { width: 24px; display: flex; margin-left: 3px; gap: 2px; flex: none; }
.vw-two .vw-mini { height: 14px; }
.vw-four { width: 24px; display: grid; grid-template-columns: 11px 11px; gap: 1px 2px; margin-left: 3px; flex: none; }
.grip-z { margin-left: 3px; }
.combo-st { width: 81px; height: 24px; margin-left: 3px; padding: 0 3px; }
.st-div-z { margin-left: 4px; }
.circ-zs { margin-left: 4px; }
.slider { width: 101px; height: 4px; background: #bbb; margin-left: 5px; position: relative; flex: none; border-radius: 2px; }
.slider-thumb { position: absolute; left: 55px; top: -7px; width: 18px; height: 18px; border-radius: 50%; border: 1px solid #888; background: radial-gradient(#777 25%, #f4f4f4 30%); }
.slider + .circ-zs { margin-left: 5px; }
.grip-e { margin-left: 5px; }
.st-panel { width: 18px; height: 18px; margin-left: 6px; }
.st-last { margin-left: 6px; opacity: .4; }

/* splitter + panel */
.splitter { width: 10px; flex: none; background: #8d8d8d repeating-linear-gradient(45deg, #888 0 1px, #969696 1px 2px); display: flex; align-items: center; }
.split-handle { width: 7px; height: 57px; background: #e9e9e9; border: 1px solid #aaa; border-left: 0; border-radius: 0 3px 3px 0; display: flex; align-items: center; justify-content: center; font-size: 12px; font-weight: 700; }
.panel { flex: 1; background: #fff; padding-left: 2px; min-width: 0; }
.panel-head { height: 24.500px; display: flex; justify-content: space-between; align-items: center; padding: 0 4px 0 5px; border-bottom: 1px solid #ccc; font-size: 13px; }
.panel-head i { font-style: normal; }
.prop-sec { height: 20px; background: #efefef; display: flex; align-items: center; gap: 4px; padding-left: 4px; color: #444; line-height: 20px; }
.prop { height: 23px; display: flex; border-bottom: 1px solid #e6e6e6; line-height: 22px; white-space: nowrap; }
.prop label { width: 107px; flex: none; text-align: right; padding-right: 4px; color: #7c7c7c; overflow: hidden; }
.val { flex: 1; border-left: 1px solid #e2e2e2; padding-left: 3px; display: flex; align-items: center; font-size: 12.500px; }
.swatch { width: 19px; height: 19px; border-radius: 3px; background: #003f71; margin-right: 3px; }

/* context menus */
.ctxmenu { position: absolute; left: 433px; top: 485px; width: 208px; height: 309px; background: #f4f4f4; border-radius: 4px; box-shadow: 0 1px 5px rgba(0,0,0,.35); padding-top: 4px; white-space: nowrap; }
.submenu { left: 637px; top: 697px; width: 262px; height: 300px; padding-top: 3px; }
.mi { height: 28px; margin: 0 4px; display: flex; align-items: center; padding: 0 10px 2px 16px; gap: 3px; position: relative; }
.mi em { margin-left: auto; font-style: normal; font-family: "Liberation Sans", sans-serif; font-size: 13px; }
.mi-off { color: #8a8a8a; }
.mi-on { background: #e9d6a8; border: 1px solid #cdbb8b; border-radius: 2px; margin-top: 1px; }
.arrow { font-weight: 700; font-size: 16px !important; }
.msep { height: 1px; margin: 2px 4px 1px; background: #d6d6d6; }
.msep-p { margin-top: 4px; }
.pastebox { height: 26px; margin: 4px 7px 0 47px; border: 1px solid #e2e2e2; border-radius: 2px; padding-left: 3px; display: flex; align-items: center; }
.pilcrow { width: 24px; flex: none; font-family: "DejaVu Sans", sans-serif; font-size: 30px; line-height: 26px; color: #4aa6f5; text-align: center; }
.check { position: absolute; left: 3px; top: 5px; font-size: 12px; font-weight: 700; }
.abc { width: 24px; flex: none; font-family: "Liberation Sans", sans-serif; font-weight: 400; font-size: 16px; line-height: 13px; color: #555; text-align: right; padding-right: 2px; }
.submenu .mi { padding-left: 15px; gap: 5px; }
.fmt { width: 24px; flex: none; font-family: "Liberation Serif", serif; font-size: 24px; line-height: 28px; color: #555; text-align: center; position: relative; white-space: nowrap; }
.fmt-i { font-style: italic; font-weight: 400; }
.fmt-u { text-decoration: underline; text-underline-offset: 2px; text-decoration-thickness: 1px; font-weight: 400; }
.fmt-x { font-weight: 400; }
.fmt sup, .fmt sub { font-family: "Liberation Sans", sans-serif; font-size: 11px; color: #3d9be9; font-weight: 400; position: absolute; line-height: 1; }
.fmt sup { top: 3px; }
.fmt sub { bottom: 0; }
.mi-gap { margin-top: 4px; }
.mi-hot { background: #f3dfae; }

/* annotations laid over the screen */
.redbox { position: absolute; border: 3.500px solid #ec0d14; border-radius: 11px; box-shadow: 1px 2px 5px rgba(0,0,0,.45), inset 1px 1px 3px rgba(0,0,0,.2); pointer-events: none; }
.rb-1 { left: 180px; top: 51px; width: 80px; height: 107px; }
.rb-2 { left: 400px; top: 754px; width: 148px; height: 77px; }
.rb-3 { left: 643px; top: 930px; width: 255px; height: 41px; }
.rb-4 { left: 1394px; top: 164px; width: 279px; height: 483px; }
.badge { position: absolute; border-radius: 50%; background: #fff; box-shadow: 0 2px 4px rgba(0,0,0,.55), inset 0 0 4px rgba(0,0,0,.4); display: flex; align-items: center; justify-content: center; }
.badge span { display: flex; align-items: center; justify-content: center; border-radius: 50%; background: radial-gradient(#ff0000 65%, #d90000); color: #fff; font-family: "DejaVu Sans", sans-serif; font-weight: 700; line-height: 1; }
.b-1 { left: 272px; top: 79px; width: 60px; height: 60px; }
.b-1 span { width: 45px; height: 45px; font-size: 30px; }
.b-2 { left: 336px; top: 766px; width: 52px; height: 52px; }
.b-2 span { width: 38px; height: 38px; font-size: 25px; }
.b-3 { left: 340px; top: 683px; width: 52px; height: 52px; }
.b-3 span { width: 38px; height: 38px; font-size: 25px; }
.b-4 { left: 588px; top: 928px; width: 42px; height: 42px; }
.b-4 span { width: 32px; height: 32px; font-size: 20px; }
```
